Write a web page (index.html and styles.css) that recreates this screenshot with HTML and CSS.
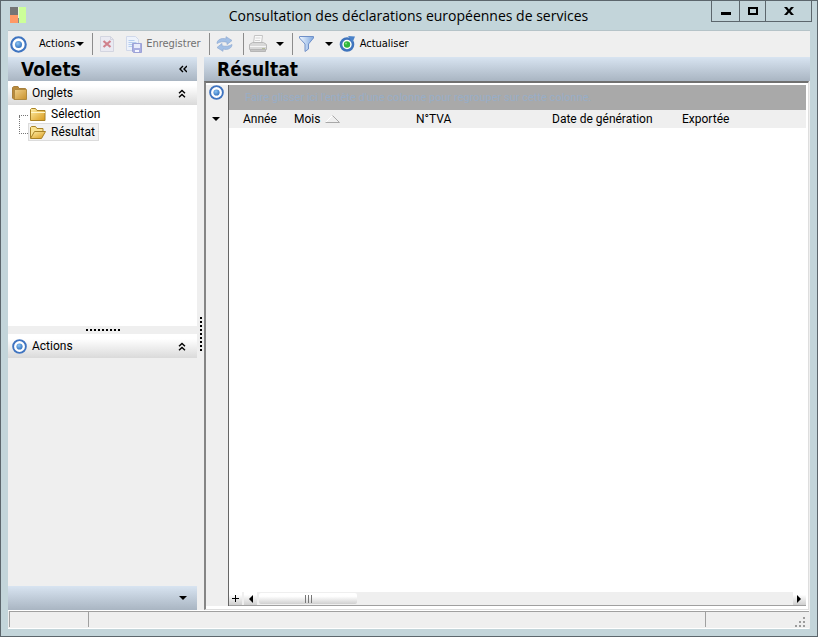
FILE: index.html
```html
<!DOCTYPE html>
<html lang="fr">
<head>
    <meta charset="UTF-8">
    <meta name="viewport" content="width=device-width, initial-scale=1.0">
    <title>Consultation des déclarations européennes de services</title>
    <link rel="stylesheet" href="styles.css">
</head>
<body>
    <!-- Shared icons -->
    <svg class="defs" width="0" height="0">
        <defs>
            <linearGradient id="gold" x1="0" y1="0" x2="1" y2="1">
                <stop offset="0" stop-color="#fff0a8"/>
                <stop offset="1" stop-color="#d99a1c"/>
            </linearGradient>
            <linearGradient id="tan" x1="0" y1="0" x2="1" y2="1">
                <stop offset="0" stop-color="#f0d08a"/>
                <stop offset="1" stop-color="#c8912c"/>
            </linearGradient>
            <linearGradient id="glass" x1="0" y1="0" x2="1" y2="0">
                <stop offset="0" stop-color="#f2f8ff"/>
                <stop offset="1" stop-color="#7fa8e0"/>
            </linearGradient>
            <radialGradient id="ball" cx="0.4" cy="0.35" r="0.7">
                <stop offset="0" stop-color="#8cc4f4"/>
                <stop offset="1" stop-color="#2f6fbc"/>
            </radialGradient>
            <symbol id="target" viewBox="0 0 16 16">
                <circle cx="8" cy="8" r="6.8" fill="#fff" stroke="#3f74c0" stroke-width="2"/>
                <circle cx="8" cy="8" r="3.3" fill="url(#ball)"/>
            </symbol>
            <symbol id="chevrons" viewBox="0 0 8 8">
                <path d="M1 3.8 4 1l3 2.8M1 7.8 4 5l3 2.8" fill="none" stroke="#000" stroke-width="1.4"/>
            </symbol>
            <symbol id="arrow" viewBox="0 0 8 4">
                <path d="M0 0h8L4 4z" fill="#000"/>
            </symbol>
        </defs>
    </svg>

    <div class="window">
        <header class="titlebar">
            <svg class="logo" width="16" height="16" viewBox="0 0 16 16">
                <path d="M0 0h8v8H0z" fill="#757575"/>
                <path d="M0 8h8v8H0z" fill="#ff9966"/>
                <path d="M9 0h7v16H9z" fill="#ccff99"/>
                <path d="M8 0h1v11H8z" fill="#e8f6d8"/>
                <path d="M8 11h1v5H8z" fill="#888"/>
            </svg>
            <h1 class="title">Consultation des déclarations européennes de services</h1>
            <div class="window-buttons">
                <button type="button" class="minimize" aria-label="Réduire"><svg width="10" height="10"><path d="M0 6h10v3H0z"/></svg></button>
                <button type="button" class="maximize" aria-label="Agrandir"><svg width="10" height="8"><path d="M1 1h8v6H1z" fill="none" stroke="#000" stroke-width="2"/></svg></button>
                <button type="button" class="close" aria-label="Fermer"><svg width="10" height="8"><path d="M0 0h3l2 2.500L7 0h3L6.500 4 10 8H7L5 5.500 3 8H0l3.500-4z"/></svg></button>
            </div>
        </header>

        <div class="content">
            <nav class="toolbar">
                <button type="button" class="tool-target" aria-label="Menu"><svg width="17" height="17"><use href="#target"/></svg></button>
                <button type="button" class="tool-actions">Actions<svg width="8" height="4" viewBox="0 0 8 4"><use href="#arrow"/></svg></button>
                <span class="separator"></span>
                <button type="button" class="tool-delete" aria-label="Supprimer" disabled>
                    <svg width="14" height="16" viewBox="0 0 14 16">
                        <path d="M.5.5h10l3 3v12H.5z" fill="#eaeaf2" stroke="#d3d5e0"/>
                        <path d="M10.500.5v3h3" fill="none" stroke="#d3d5e0"/>
                        <path d="M3.500 5l7 6M10.500 5l-7 6" stroke="#d0808c" stroke-width="2.200"/>
                    </svg>
                </button>
                <button type="button" class="tool-save" disabled>
                    <svg width="16" height="17" viewBox="0 0 16 17">
                        <path d="M.5.5h9l3 3v11H.5z" fill="#edf2fb" stroke="#d0d8ea"/>
                        <path d="M2.500 4.500h6M2.500 6.500h8M2.500 8.500h6M2.500 10.500h4" stroke="#b5cdee"/>
                        <path d="M6.500 7.500h9v9h-8l-1-1z" fill="#a9aee0" stroke="#9ca2d6"/>
                        <path d="M8 8h6v4H8z" fill="#e8ebfa"/>
                        <path d="M9 14h4v2H9z" fill="#f4f5ff"/>
                    </svg>Enregistrer
                </button>
                <span class="separator"></span>
                <button type="button" class="tool-sync" aria-label="Synchroniser">
                    <svg width="17" height="16" viewBox="0 0 17 16" stroke="#8fabd2" stroke-width=".7">
                        <path d="M1 7.500C1 4 5 1.500 10 3V.7l6 3.800-5 4V6.200C7 5.200 4 5.700 1 7.500z" fill="#a3c0e6"/>
                        <path d="M16 8.500c0 3.500-4 6-9 4.500v2.300L1 11.500l5-4v2.300c4 1 7 .5 10-1.300z" fill="#a3c0e6"/>
                    </svg>
                </button>
                <span class="separator"></span>
                <button type="button" class="tool-print" aria-label="Imprimer">
                    <svg width="18" height="18" viewBox="0 0 18 18">
                        <path d="M4.500 8.500l1-8h8l-1 8z" fill="#fafafa" stroke="#c4c4c4"/>
                        <path d="M6.500 3h5M6 5.500h5" stroke="#d4d4d4"/>
                        <path d="M.5 9.500l3-2h11l3 2v5H.5z" fill="#d8d8d8" stroke="#b8b8b8"/>
                        <path d="M1 11.500h16" stroke="#f6f6f6"/>
                        <path d="M1.500 14.500h15v2h-15z" fill="#c5c5c5" stroke="#b5b5b5"/>
                        <path d="M13 13h3v1h-3z" fill="#b5bd99"/>
                    </svg>
                    <svg width="8" height="4"><use href="#arrow"/></svg>
                </button>
                <span class="separator"></span>
                <button type="button" class="tool-filter" aria-label="Filtrer">
                    <svg width="15" height="16" viewBox="0 0 15 16">
                        <path d="M.5.5h14v1.500L9.500 8v5L6 15.500V8L.5 2z" fill="url(#glass)" stroke="#7090c8"/>
                    </svg>
                    <svg width="8" height="4"><use href="#arrow"/></svg>
                </button>
                <button type="button" class="tool-refresh">
                    <svg width="16" height="16" viewBox="0 0 16 16">
                        <circle cx="8" cy="8.500" r="6" fill="#fff" stroke="#3f74bd" stroke-width="2.600"/>
                        <path d="M9 0l7 .5-2.500 6z" fill="#4b83ca"/>
                        <circle cx="8" cy="8.500" r="3.200" fill="#30b63c"/>
                        <circle cx="7" cy="7.500" r="1" fill="#86df80"/>
                    </svg>Actualiser
                </button>
            </nav>

            <div class="workspace">
                <aside class="sidebar">
                    <div class="band">
                        <h2>Volets</h2>
                        <button type="button" aria-label="Masquer les volets">
                            <svg width="8" height="8" viewBox="0 0 8 8"><path d="M4 1 1 4l3 3M8 1 5 4l3 3" fill="none" stroke="#000" stroke-width="1.400"/></svg>
                        </button>
                    </div>
                    <section class="panel tabs-panel">
                        <div class="panel-header">
                            <svg width="15" height="14" viewBox="0 0 15 14">
                                <path d="M.5 1.500 2 .5h4l1 2h6.500v11H2L.5 12z" fill="#b98a3c" stroke="#a8803c"/>
                                <path d="M2.500 3.500h12v10h-12z" fill="url(#tan)" stroke="#b08a40"/>
                            </svg>
                            <h3>Onglets</h3>
                            <button type="button" aria-label="Replier Onglets"><svg width="8" height="9"><use href="#chevrons"/></svg></button>
                        </div>
                        <ul class="tree">
                            <li><a href="#selection">
                                <svg width="16" height="13" viewBox="0 0 16 13">
                                    <path d="M.5 1.500l1-1h4l1.500 2h8v10H.5z" fill="url(#gold)" stroke="#a88226"/>
                                    <path d="M1 4.500h14" stroke="#fff6c8"/>
                                </svg>Sélection</a></li>
                            <li><a href="#resultat" class="selected">
                                <svg width="16" height="13" viewBox="0 0 16 13">
                                    <path d="M.5 12V1.500l1-1h4l1.500 2h6v3" fill="#f9e391" stroke="#a88226"/>
                                    <path d="M.5 12.500l4-7h11l-4 7z" fill="url(#gold)" stroke="#a88226"/>
                                </svg>Résultat</a></li>
                        </ul>
                    </section>
                    <div class="splitter-row"></div>
                    <section class="panel actions-panel">
                        <div class="panel-header">
                            <svg width="15" height="15"><use href="#target"/></svg>
                            <h3>Actions</h3>
                            <button type="button" aria-label="Replier Actions"><svg width="8" height="9"><use href="#chevrons"/></svg></button>
                        </div>
                    </section>
                    <div class="band band-bottom">
                        <button type="button" aria-label="Options"><svg width="8" height="4"><use href="#arrow"/></svg></button>
                    </div>
                </aside>

                <div class="splitter-column"></div>

                <main class="result">
                    <div class="band">
                        <h2>Résultat</h2>
                    </div>
                    <div class="result-body">
                        <div class="gutter">
                            <button type="button" aria-label="Menu de la grille"><svg width="15" height="15"><use href="#target"/></svg></button>
                            <button type="button" aria-label="Colonnes"><svg width="8" height="4"><use href="#arrow"/></svg></button>
                        </div>
                        <div class="grid">
                            <p class="group-box">Faire glisser ici l'entête d'une colonne pour regrouper sur cette colonne.</p>
                            <table>
                                <thead>
                                    <tr>
                                        <th class="col-year">Année</th>
                                        <th class="col-month">Mois<svg width="15" height="8" viewBox="0 0 15 8"><path d="M.5 7.500 7.500.5" fill="none" stroke="#fff"/><path d="M.5 7.500h14L7.500.5" fill="none" stroke="#a8a8a8"/></svg></th>
                                        <th class="col-vat">N°TVA</th>
                                        <th class="col-date">Date de génération</th>
                                        <th>Exportée</th>
                                    </tr>
                                </thead>
                            </table>
                            <div class="scrollbar">
                                <button type="button" class="add" aria-label="Ajouter"><svg width="7" height="7"><path d="M3 0h1v3h3v1H4v3H3V4H0V3h3z"/></svg></button>
                                <button type="button" aria-label="Défiler à gauche"><svg width="5" height="8"><path d="M5 0v8L1 4z"/></svg></button>
                                <div class="track"><div class="thumb"></div></div>
                                <button type="button" aria-label="Défiler à droite"><svg width="5" height="8"><path d="M0 0v8l4-4z"/></svg></button>
                            </div>
                        </div>
                    </div>
                </main>
            </div>

            <footer class="statusbar">
                <span class="status-first"></span>
                <span class="status-main"></span>
                <span class="status-last">
                    <svg width="10" height="10" fill="#9c9c9c"><path d="M8 0h2v2H8zM4 4h2v2H4zM8 4h2v2H8zM0 8h2v2H0zM4 8h2v2H4zM8 8h2v2H8z"/></svg>
                </span>
            </footer>
        </div>
    </div>
</body>
</html>
```
FILE: styles.css
```css
/* Reset styles for margin, padding, and box sizing */
* {
    margin: 0;
    padding: 0;
    box-sizing: border-box;
}

body {
    font-family: Roboto, "Noto Sans", sans-serif;
    font-size: 12px;
    line-height: 16px;
    color: #000;
}

svg {
    display: block;
    flex: none;
}

.defs {
    position: absolute;
}

button {
    display: flex;
    align-items: center;
    justify-content: center;
    border: none;
    background: none;
    font: inherit;
    color: inherit;
    white-space: nowrap;
}

/* Window frame */
.window {
    display: flex;
    flex-direction: column;
    height: 100vh;
    padding: 0 5px 7px 7px;
    border: 1px solid #5c666c;
    background-color: #c3d5da;
}

.titlebar {
    display: flex;
    align-items: flex-start;
    height: 29px;
    flex: none;
}

.logo {
    margin: 6px 0 0 2px;
}

.title {
    flex: 1;
    padding-left: 80px;
    font-family: "Open Sans", "Noto Sans", sans-serif;
    font-size: 14px;
    font-weight: normal;
    line-height: 29px;
    text-align: center;
}

.window-buttons {
    display: flex;
    border: 1px solid #5c666c;
    border-top: none;
}

.window-buttons button {
    height: 20px;
}

.minimize {
    width: 27px;
}

.maximize {
    width: 27px;
    border-left: 1px solid #5c666c;
    border-right: 1px solid #5c666c;
}

.close {
    width: 45px;
}

.content {
    display: flex;
    flex-direction: column;
    flex: 1;
    min-height: 0;
    margin-right: 2px;
    background-color: #efefef;
    border-top: 1px solid #b5c3c8;
}

/* Toolbar */
.toolbar {
    display: flex;
    align-items: center;
    height: 26px;
    flex: none;
    padding-left: 2px;
    font-family: "DejaVu Sans Condensed", "DejaVu Sans", sans-serif;
    font-stretch: condensed;
    font-size: 11px;
}

.separator {
    width: 1px;
    height: 22px;
    background-color: #8c8c8c;
}

.tool-actions {
    gap: 1px;
    margin: 0 8px 0 12px;
}

.tool-delete {
    margin: 0 12px 0 7px;
}

.tool-save {
    gap: 4px;
    margin-right: 8px;
    color: #6f6f6f;
}

.tool-sync {
    margin: 0 10px 0 6px;
}

.tool-print {
    gap: 9px;
    margin: 0 8px 0 5px;
}

.tool-filter {
    gap: 11px;
    margin: 0 6px;
}

.tool-refresh {
    gap: 5px;
}

/* Main area */
.workspace {
    display: flex;
    flex: 1;
    min-height: 0;
}

.sidebar {
    display: flex;
    flex-direction: column;
    width: 189px;
    flex: none;
}

.band {
    display: flex;
    align-items: center;
    justify-content: space-between;
    height: 24px;
    flex: none;
    padding: 0 10px 0 13px;
    background: linear-gradient(#d8e4f1, #a9b5c2);
}

.band h2 {
    font-family: "DejaVu Sans Condensed", "DejaVu Sans", sans-serif;
    font-stretch: condensed;
    font-size: 19px;
    line-height: 24px;
}

.band-bottom {
    justify-content: flex-end;
}

.panel-header {
    display: flex;
    align-items: center;
    gap: 5px;
    height: 24px;
    padding: 0 11px 0 4px;
    background: linear-gradient(#fff 20%, #dadada);
}

.panel-header h3 {
    flex: 1;
    font-size: 12px;
    font-weight: normal;
}

.tabs-panel {
    flex: 35;
    background-color: #fff;
}

.actions-panel {
    flex: 36;
}

/* Folder tree with its dotted connector */
.tree {
    margin-left: 11px;
    list-style: none;
}

.tree li {
    width: 9px;
    height: 18px;
    border-bottom: 1px dotted #777;
    white-space: nowrap;
}

.tree li:first-child {
    height: 11px;
}

.tree li + li {
    border-left: 1px dotted #777;
}

.tree a {
    display: inline-flex;
    align-items: center;
    gap: 5px;
    height: 18px;
    margin-left: 9px;
    padding: 0 3px 0 1px;
    border: 1px solid transparent;
    color: #000;
    text-decoration: none;
}

.tree li + li a {
    margin: 7px 0 0 8px;
}

.tree .selected {
    border-color: #dcdcdc;
    background-color: #f2f2f2;
}

.splitter-row {
    display: flex;
    align-items: center;
    justify-content: center;
    height: 8px;
    flex: none;
}

.splitter-row::after {
    content: "";
    width: 34px;
    height: 2px;
    background: repeating-linear-gradient(to right, #000 0 2px, transparent 2px 4px);
}

.splitter-column {
    display: flex;
    align-items: center;
    justify-content: center;
    width: 7px;
    flex: none;
}

.splitter-column::after {
    content: "";
    width: 2px;
    height: 34px;
    background: repeating-linear-gradient(#000 0 2px, transparent 2px 4px);
}

/* Result grid */
.result {
    display: flex;
    flex-direction: column;
    flex: 1;
    min-width: 0;
}

.result-body {
    display: flex;
    flex: 1;
    min-height: 0;
    margin-right: 1px;
    padding: 2px 2px 3px 0;
    border: 1px solid #dedede;
    border-top: 2px solid #707070;
    border-left: 2px solid #858585;
    background-color: #fff;
}

.gutter {
    display: flex;
    flex-direction: column;
    align-items: center;
    gap: 17px;
    width: 22px;
    flex: none;
    padding-right: 2px;
    background-color: #efefef;
}

.gutter button:last-child {
    height: 4px;
}

.grid {
    display: flex;
    flex-direction: column;
    flex: 1;
    min-width: 0;
    border-left: 1px solid #666;
}

.group-box {
    height: 25px;
    flex: none;
    padding-left: 16px;
    background-color: #a9a9a9;
    color: #98adc6;
    font-size: 11px;
    line-height: 26px;
    white-space: nowrap;
}

table {
    width: 100%;
    table-layout: fixed;
    border-collapse: collapse;
    background-color: #efefef;
}

th {
    height: 18px;
    padding-left: 5px;
    font-size: 12px;
    font-weight: normal;
    text-align: left;
    white-space: nowrap;
}

th svg {
    display: inline-block;
    margin-left: 5px;
}

.col-year {
    width: 60px;
    padding-left: 14px;
}

.col-month {
    width: 122px;
}

.col-vat {
    width: 136px;
}

.col-date {
    width: 130px;
}

.scrollbar {
    display: flex;
    height: 14px;
    flex: none;
    margin-top: auto;
    border-bottom: 1px solid #a0a0a0;
    background-color: #efefef;
}

.scrollbar button {
    width: 13px;
    background: linear-gradient(#fff 20%, #cfcfcf);
}

.scrollbar .add {
    margin-right: 2px;
}

.track {
    flex: 1;
    padding: 1px 2px;
}

/* Scroll thumb and the grip in its middle */
.thumb {
    display: flex;
    align-items: center;
    justify-content: center;
    width: 98px;
    height: 11px;
    border-radius: 2px;
    background: linear-gradient(#fff 30%, #d0d0d0);
}

.thumb::after {
    content: "";
    width: 7px;
    height: 8px;
    background: repeating-linear-gradient(to right, #777 0 1px, transparent 1px 3px);
}

/* Status bar */
.statusbar {
    display: flex;
    height: 19px;
    flex: none;
    margin-right: 1px;
    padding: 0 0 1px 1px;
    border-top: 1px solid #fff;
    border-bottom: 1px solid #fff;
}

.statusbar span {
    border-top: 1px solid #a0a0a0;
    border-left: 1px solid #a0a0a0;
}

.status-first {
    width: 79px;
}

.status-main {
    flex: 1;
}

.status-last {
    display: flex;
    align-items: flex-end;
    justify-content: flex-end;
    width: 104px;
    padding-right: 4px;
}
```
